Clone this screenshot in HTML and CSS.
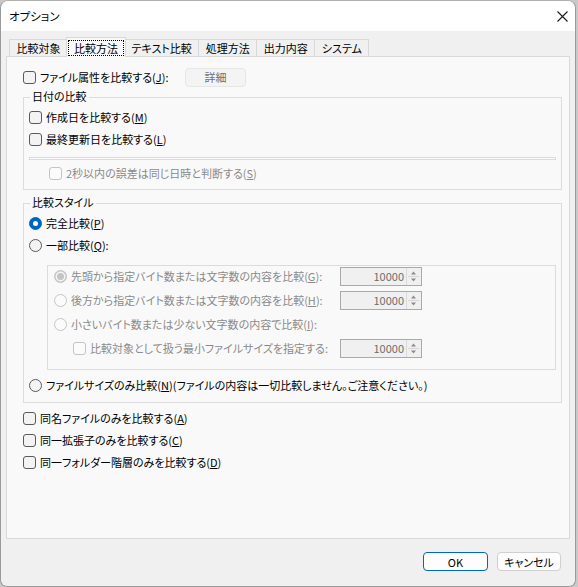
FILE: index.html
```html
<!DOCTYPE html>
<html lang="ja">
<head>
<meta charset="utf-8">
<title>オプション</title>
<link rel="stylesheet" href="styles.css">
</head>
<body>
<div class="window">
  <div class="titlebar">
    <span class="title">オプション</span>
    <svg class="close" width="11" height="11" viewBox="0 0 11 11"><path d="M0.5 0.5 L10.5 10.5 M10.5 0.5 L0.5 10.5" stroke="#1a1a1a" stroke-width="1.1" fill="none"/></svg>
  </div>
  <div class="tabs">
    <div class="tab">比較対象</div>
    <div class="tab active"><span class="focus">比較方法</span></div>
    <div class="tab">テキスト比較</div>
    <div class="tab">処理方法</div>
    <div class="tab">出力内容</div>
    <div class="tab">システム</div>
  </div>
  <div class="panel">
    <div class="row first">
      <div class="item"><span class="cb"></span><span>ファイル属性を比較する(<u>J</u>):</span></div>
      <button class="btn detail">詳細</button>
    </div>

    <fieldset class="group g1">
      <legend>日付の比較</legend>
      <div class="row"><div class="item"><span class="cb"></span><span>作成日を比較する(<u>M</u>)</span></div></div>
      <div class="row"><div class="item"><span class="cb"></span><span>最終更新日を比較する(<u>L</u>)</span></div></div>
      <div class="sep"></div>
      <div class="row sub disabled"><div class="item"><span class="cb"></span><span>2秒以内の誤差は同じ日時と判断する(<u>S</u>)</span></div></div>
    </fieldset>

    <fieldset class="group g2">
      <legend>比較スタイル</legend>
      <div class="row"><div class="item"><span class="rb on"></span><span>完全比較(<u>P</u>)</span></div></div>
      <div class="row"><div class="item"><span class="rb"></span><span>一部比較(<u>Q</u>):</span></div></div>
      <div class="inner disabled">
        <div class="irow">
          <div class="item"><span class="rb on"></span><span>先頭から指定バイト数または文字数の内容を比較(<u>G</u>):</span></div>
          <div class="spin"><span class="val">10000</span><span class="arrows"><svg width="13" height="17" viewBox="0 0 13 17"><path d="M4 6.5 L6.5 3.5 L9 6.5 Z M4 10.5 L6.5 13.5 L9 10.5 Z" fill="#8c8c8c"/><path d="M1 8.5 H12" stroke="#d6d6d6" stroke-width="1"/></svg></span></div>
        </div>
        <div class="irow">
          <div class="item"><span class="rb"></span><span>後方から指定バイト数または文字数の内容を比較(<u>H</u>):</span></div>
          <div class="spin"><span class="val">10000</span><span class="arrows"><svg width="13" height="17" viewBox="0 0 13 17"><path d="M4 6.5 L6.5 3.5 L9 6.5 Z M4 10.5 L6.5 13.5 L9 10.5 Z" fill="#8c8c8c"/><path d="M1 8.5 H12" stroke="#d6d6d6" stroke-width="1"/></svg></span></div>
        </div>
        <div class="irow">
          <div class="item"><span class="rb"></span><span>小さいバイト数または少ない文字数の内容で比較(<u>I</u>):</span></div>
        </div>
        <div class="irow">
          <div class="item indent"><span class="cb"></span><span>比較対象として扱う最小ファイルサイズを指定する:</span></div>
          <div class="spin"><span class="val">10000</span><span class="arrows"><svg width="13" height="17" viewBox="0 0 13 17"><path d="M4 6.5 L6.5 3.5 L9 6.5 Z M4 10.5 L6.5 13.5 L9 10.5 Z" fill="#8c8c8c"/><path d="M1 8.5 H12" stroke="#d6d6d6" stroke-width="1"/></svg></span></div>
        </div>
      </div>
      <div class="row last"><div class="item"><span class="rb"></span><span>ファイルサイズのみ比較(<u>N</u>)(ファイルの内容は一切比較しません。ご注意ください。)</span></div></div>
    </fieldset>

    <div class="bottom-checks">
      <div class="row"><div class="item"><span class="cb"></span><span>同名ファイルのみを比較する(<u>A</u>)</span></div></div>
      <div class="row"><div class="item"><span class="cb"></span><span>同一拡張子のみを比較する(<u>C</u>)</span></div></div>
      <div class="row"><div class="item"><span class="cb"></span><span>同一フォルダー階層のみを比較する(<u>D</u>)</span></div></div>
    </div>
  </div>
  <div class="buttons">
    <button class="btn ok">OK</button>
    <button class="btn cancel">キャンセル</button>
  </div>
</div>
</body>
</html>
```
FILE: styles.css
```css
html {
  background: #c9c9c9;
}
body {
  margin: 0;
  font-family: "Noto Sans CJK JP", "Noto Sans", sans-serif;
  font-size: 11px;
  line-height: 14px;
  color: #000;
  font-feature-settings: "palt";
}
.window {
  width: 576px;
  height: 587px;
  box-sizing: border-box;
  border: 1px solid #9a9a9a;
  border-top-color: #b0b0b0;
  border-radius: 8px 8px 7px 7px;
  background: #f0f0f0;
  overflow: hidden;
  display: flex;
  flex-direction: column;
}
.titlebar {
  height: 30px;
  flex: none;
  background: #ffffff;
  display: flex;
  align-items: center;
  justify-content: space-between;
  padding: 0 7px 0 8px;
}
.title {
  font-size: 11.5px;
}
.close {
  display: block;
}
.tabs {
  flex: none;
  height: 19px;
  margin-top: 6px;
  padding-left: 8px;
  display: flex;
  align-items: flex-end;
}
.tab {
  height: 17px;
  box-sizing: border-box;
  border: 1px solid #d9d9d9;
  border-bottom: none;
  background: #f0f0f0;
  padding: 0 6.5px;
  margin-left: -1px;
  display: flex;
  align-items: center;
  white-space: nowrap;
}
.tab:first-child {
  margin-left: 0;
}
.tab.active {
  height: 20px;
  margin-bottom: -1px;
  background: #f9f9f9;
  position: relative;
  z-index: 1;
  padding: 0 1px;
  margin-left: -2px;
  margin-right: -1px;
}
.focus {
  border: 1px dotted #000;
  padding: 0 5px;
  height: 16px;
  box-sizing: border-box;
  display: flex;
  align-items: center;
}
.panel {
  flex: none;
  height: 483px;
  box-sizing: border-box;
  margin: 0 5px;
  border: 1px solid #d9d9d9;
  background: #f9f9f9;
  padding: 0 7px 0 16px;
}
.row {
  height: 22px;
  display: flex;
  align-items: center;
}
.row.first {
  margin-top: 9px;
  display: grid;
  grid-template-columns: 162px 61px;
  align-items: center;
}
.item {
  display: flex;
  align-items: center;
  white-space: nowrap;
}
.cb {
  width: 13px;
  height: 13px;
  box-sizing: border-box;
  border: 1px solid #5a5a5a;
  border-radius: 3px;
  background: #f3f3f3;
  margin-right: 4px;
  flex: none;
}
.rb {
  width: 13px;
  height: 13px;
  box-sizing: border-box;
  border: 1px solid #5a5a5a;
  border-radius: 50%;
  background: #f3f3f3;
  margin-right: 4px;
  flex: none;
  display: flex;
  align-items: center;
  justify-content: center;
}
.rb.on {
  background: #0067c0;
  border-color: #0067c0;
}
.rb.on::after {
  content: "";
  width: 5px;
  height: 5px;
  border-radius: 50%;
  background: #ffffff;
}
.disabled {
  color: #8a8a8a;
}
.disabled .cb,
.disabled .rb {
  border-color: #c4c4c4;
  background: #fbfbfb;
}
.disabled .rb.on {
  background: #c4c4c4;
  border-color: #c4c4c4;
}
.disabled .rb.on::after {
  width: 7px;
  height: 7px;
  background: #c4c4c4;
  box-shadow: 0 0 0 1.5px #f4f4f4;
}
.btn {
  font-family: inherit;
  font-size: 11px;
  line-height: 14px;
  font-feature-settings: "palt";
  height: 19px;
  box-sizing: border-box;
  border-radius: 4px;
  padding: 0;
  margin: 0;
  color: #000;
}
.btn.detail {
  width: 61px;
  height: 19px;
  background: #f4f4f4;
  border: 1px solid #e6e6e6;
  color: #6f6f6f;
}
.group {
  margin: 0;
  min-width: 0;
  border: 1px solid #dcdcdc;
  padding: 0 5px;
}
.group legend {
  padding: 0 2px 3px;
  margin-left: 1px;
  line-height: 14px;
}
.g1 {
  margin-top: 1px;
  padding-bottom: 5px;
}
.sep {
  margin-top: 7px;
  height: 3px;
  box-sizing: border-box;
  border: 1px solid #dadada;
  background: #fdfdfd;
}
.row.sub {
  margin-top: 2px;
  padding-left: 20px;
}
.g2 {
  margin-top: 5px;
  padding-bottom: 6px;
}
.inner {
  margin-top: 9px;
  margin-left: 18px;
  border: 1px solid #dcdcdc;
  padding: 0 0 11px 6px;
  display: flex;
  flex-direction: column;
  gap: 4px;
}
.irow {
  height: 20px;
  display: grid;
  grid-template-columns: 286px 82px;
  align-items: center;
}
.item.indent {
  padding-left: 19px;
}
.spin {
  width: 82px;
  height: 19px;
  box-sizing: border-box;
  border: 1px solid #a9a9a9;
  background: #f0f0f0;
  display: flex;
  align-items: stretch;
}
.val {
  flex: 1;
  text-align: right;
  padding-right: 2px;
  color: #6d6d6d;
  line-height: 17px;
}
.arrows {
  width: 13px;
  flex: none;
  display: flex;
  border-left: 1px solid #dcdcdc;
  margin: 0 1px 0 0;
}
.arrows svg {
  display: block;
}
.row.last {
  margin-top: 4px;
}
.bottom-checks {
  margin-top: 4px;
}
.buttons {
  flex: none;
  margin-top: 13px;
  display: flex;
  justify-content: flex-end;
  gap: 9px;
  padding-right: 14px;
}
.btn.ok {
  width: 65px;
  background: #fdfdfd;
  border: 1px solid #0067c0;
}
.btn.cancel {
  width: 64px;
  background: #fdfdfd;
  border: 1px solid #d0d0d0;
}
```
